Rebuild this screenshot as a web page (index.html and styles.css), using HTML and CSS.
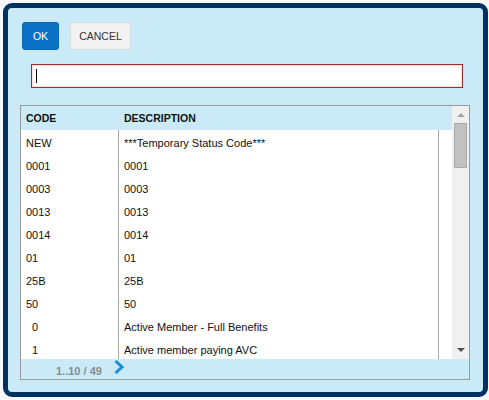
FILE: index.html
```html
<!DOCTYPE html>
<html>
<head>
<meta charset="utf-8">
<link rel="stylesheet" href="styles.css">
</head>
<body>
<div class="page">
  <div class="dialog">
    <div class="toolbar">
      <button class="btn btn-ok">OK</button>
      <button class="btn btn-cancel">CANCEL</button>
    </div>
    <div class="search"><span class="caret"></span></div>
    <div class="grid">
      <div class="scroller">
        <div class="rows">
          <div class="row head"><div class="c-code">CODE</div><div class="c-desc">DESCRIPTION</div></div>
          <div class="row"><div class="c-code">NEW</div><div class="c-desc">***Temporary Status Code***</div></div>
          <div class="row"><div class="c-code">0001</div><div class="c-desc">0001</div></div>
          <div class="row"><div class="c-code">0003</div><div class="c-desc">0003</div></div>
          <div class="row"><div class="c-code">0013</div><div class="c-desc">0013</div></div>
          <div class="row"><div class="c-code">0014</div><div class="c-desc">0014</div></div>
          <div class="row"><div class="c-code">01</div><div class="c-desc">01</div></div>
          <div class="row"><div class="c-code">25B</div><div class="c-desc">25B</div></div>
          <div class="row"><div class="c-code">50</div><div class="c-desc">50</div></div>
          <div class="row"><div class="c-code pre">  0</div><div class="c-desc">Active Member - Full Benefits</div></div>
          <div class="row"><div class="c-code pre">  1</div><div class="c-desc">Active member paying AVC</div></div>
        </div>
        <div class="vscroll">
          <div class="arrow up"></div>
          <div class="thumb"></div>
          <div class="track"></div>
          <div class="arrow down"></div>
        </div>
      </div>
      <div class="pager">
        <span class="count">1..10 / 49</span>
        <svg class="next" width="10" height="14" viewBox="0 0 10 14"><path d="M1.5 1 L8 7 L1.5 13" fill="none" stroke="#1b8fd2" stroke-width="3" stroke-linejoin="miter"/></svg>
      </div>
    </div>
  </div>
</div>
</body>
</html>
```

FILE: styles.css
```css
html, body {
  margin: 0;
  padding: 0;
}
body {
  background: #f7f8f9;
  font-family: "Liberation Sans", Arial, sans-serif;
  width: 489px;
  height: 400px;
  overflow: hidden;
}
.page {
  padding: 3px 1px 3px 3px;
}
.dialog {
  box-sizing: border-box;
  width: 485px;
  height: 394px;
  border: 5px solid #003262;
  border-radius: 9px;
  background: #c9eaf6;
  padding-top: 14px;
}
.toolbar {
  display: flex;
  gap: 11px;
  padding-left: 14px;
  height: 28px;
}
.btn {
  box-sizing: border-box;
  height: 28px;
  border-radius: 3px;
  font-family: "Liberation Sans", Arial, sans-serif;
  font-size: 10.5px;
  padding: 0;
  margin: 0;
}
.btn-ok {
  width: 37px;
  background: #0b72c6;
  border: 1px solid #0a66b2;
  color: #fff;
}
.btn-cancel {
  width: 61px;
  background: #f2f2f2;
  border: 1px solid #d8dcdf;
  color: #333;
}
.search {
  box-sizing: border-box;
  margin: 14px 0 0 23px;
  width: 432px;
  height: 24px;
  background: #fff;
  border: 1px solid #a32a2a;
  box-shadow: inset 0 0 0 1px #fbe3e3;
  display: flex;
  align-items: center;
  padding-left: 4px;
}
.caret {
  width: 1px;
  height: 14px;
  background: #000;
}
.grid {
  box-sizing: border-box;
  margin: 17px 0 0 12px;
  width: 450px;
  height: 275px;
  border: 1px solid #9a9a9a;
  display: flex;
  flex-direction: column;
}
.scroller {
  height: 253px;
  display: flex;
  overflow: hidden;
}
.rows {
  width: 431px;
  background: #fff;
  display: flex;
  flex-direction: column;
}
.row {
  display: flex;
  height: 23px;
  font-size: 11px;
  color: #111;
  align-items: center;
  flex: none;
}
.row .c-code {
  box-sizing: border-box;
  width: 98px;
  height: 100%;
  padding: 3px 0 0 5px;
  border-right: 1px solid #a9a9a9;
  display: flex;
  align-items: center;
}
.row .c-desc {
  box-sizing: border-box;
  width: 320px;
  height: 100%;
  padding: 3px 0 0 5px;
  border-right: 1px solid #a9a9a9;
  display: flex;
  align-items: center;
}
.pre {
  white-space: pre;
}
.row.head {
  height: 24px;
  background: #c9eaf6;
  font-weight: bold;
  font-size: 10.5px;
  color: #111;
}
.row.head .c-code,
.row.head .c-desc {
  border-right-color: transparent;
  padding-top: 0;
}
.vscroll {
  width: 17px;
  background: #f0f0f0;
  display: flex;
  flex-direction: column;
  align-items: center;
}
.arrow {
  width: 0;
  height: 0;
  border-left: 4px solid transparent;
  border-right: 4px solid transparent;
  flex: none;
}
.arrow.up {
  border-bottom: 4px solid #a3a3a3;
  margin-top: 7px;
}
.arrow.down {
  border-top: 4px solid #505050;
  margin-bottom: 7px;
}
.thumb {
  box-sizing: border-box;
  width: 13px;
  height: 45px;
  margin-top: 6px;
  background: #c1c1c1;
  border: 1px solid #a8a8a8;
  flex: none;
}
.track {
  flex: 1;
}
.pager {
  height: 20px;
  background: #c9eaf6;
  display: flex;
  align-items: center;
  padding-left: 35px;
}
.count {
  font-size: 11px;
  font-weight: bold;
  color: #8a8a8a;
  padding-top: 4px;
}
.next {
  margin-left: 12px;
  margin-top: -4px;
}
```
